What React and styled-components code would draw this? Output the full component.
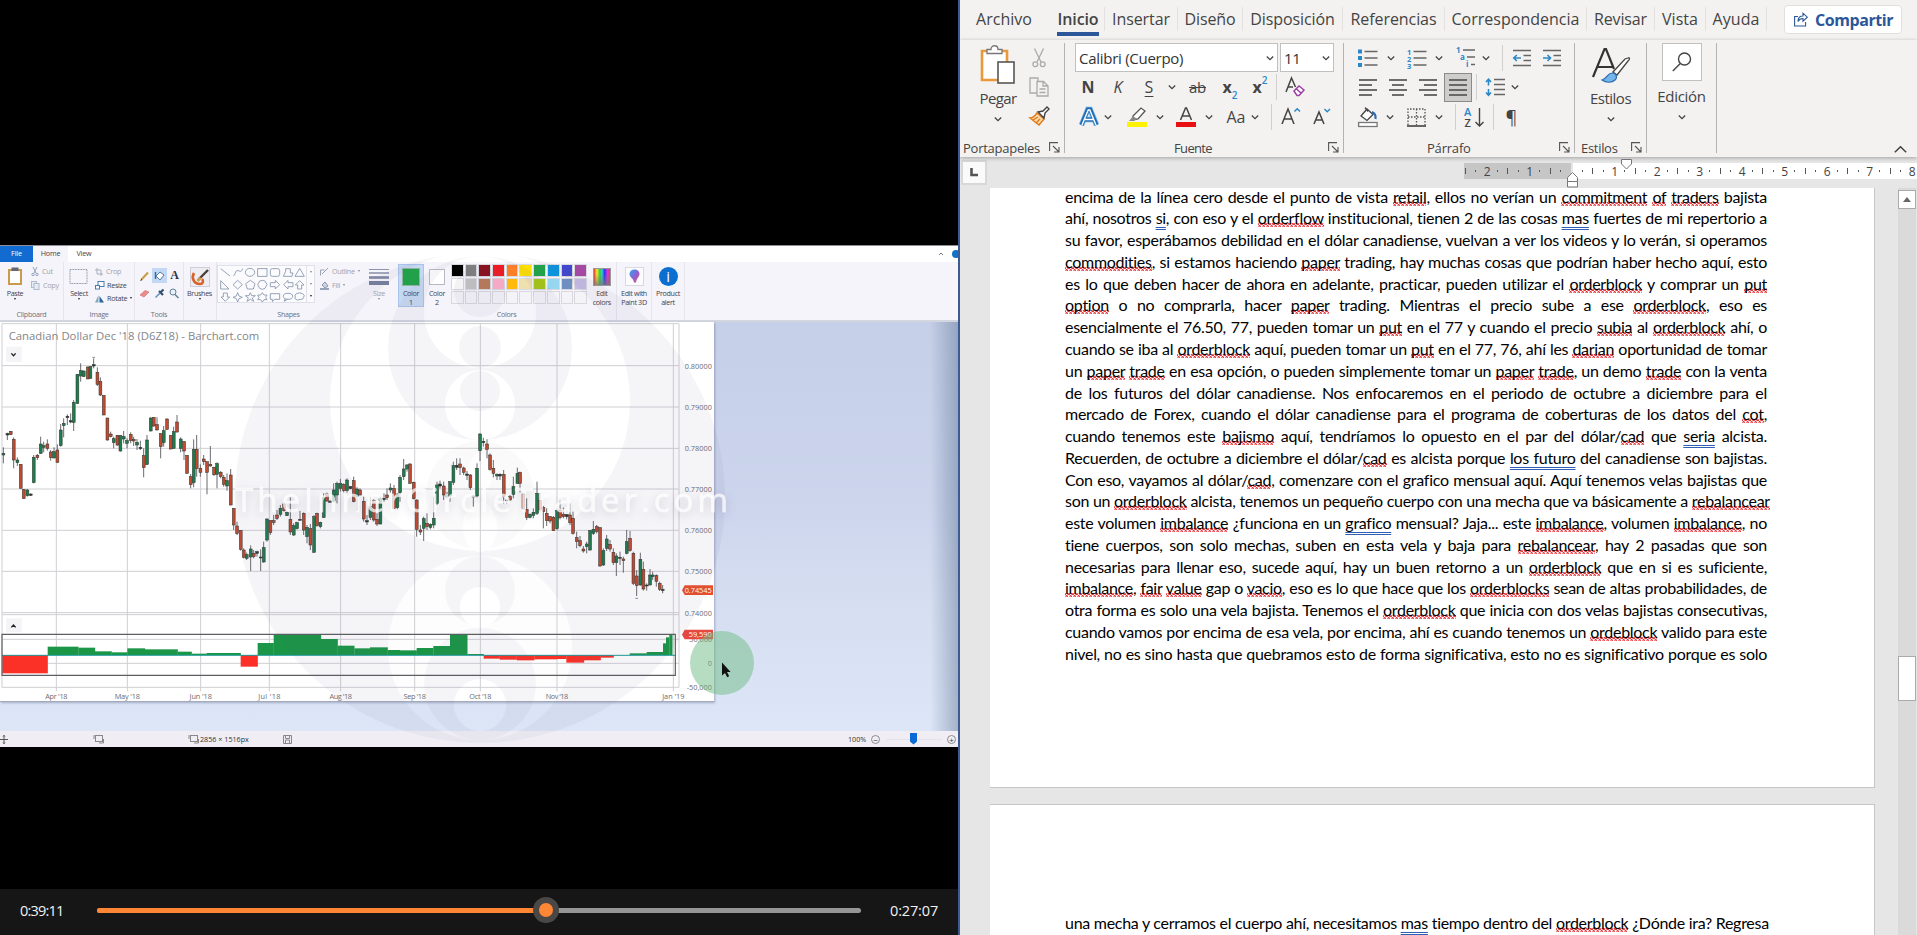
import React from "react";
import styled, { createGlobalStyle, css } from "styled-components";

const Global = createGlobalStyle`
  * { box-sizing: border-box; }
  html, body { margin: 0; padding: 0; background: #000; overflow: hidden; }
  svg { display: block; flex: none; overflow: visible; }
`;
const UI = `"Open Sans", "Noto Sans", sans-serif`;

/* ---------- frame ---------- */
const Screen = styled.div`
  display: flex;
  width: 1917px;
  height: 935px;
  overflow: hidden;
  font-family: ${UI};
`;
const VideoPane = styled.section`
  display: flex;
  flex-direction: column;
  width: 958px;
  height: 935px;
  padding-top: 245px;
  background: #000;
  overflow: hidden;
`;
const WordPane = styled.section`
  display: flex;
  flex-direction: column;
  width: 959px;
  height: 935px;
  border-left: 2px solid #3d5a94;
  background: #e6e6e6;
  overflow: hidden;
`;

/* ---------- video: paint window ---------- */
const Paint = styled.div`
  position: relative;
  width: 958px;
  height: 502px;
  overflow: hidden;
  background: #dbe4f4;
  border-top: 1px solid #8e8e96;
  color: #55555f;
  font-size: 7.2px;
  line-height: 9px;
`;
const PaintTabs = styled.div`
  display: flex;
  height: 16px;
  background: #fff;
`;
const PaintTab = styled.div`
  width: ${(p) => p.$w}px;
  padding-top: 3px;
  text-align: center;
  letter-spacing: -0.15px;
  color: ${(p) => (p.$file ? "#fff" : "#44444c")};
  background: ${(p) => (p.$file ? "#126bd0" : p.$on ? "#f5f4fa" : "#fff")};
`;
const TabTail = styled.div`
  display: flex;
  align-items: center;
  justify-content: flex-end;
  gap: 8px;
  flex: 1;
  color: #777;
`;
const HelpDot = styled.span`
  width: 8px;
  height: 8px;
  margin-right: -2px;
  border-radius: 50%;
  background: #1371c8;
`;
const PaintRibbon = styled.div`
  display: flex;
  height: 60px;
  background: #f5f4fa;
  border-bottom: 2px solid #d3d5df;
`;
const PGroup = styled.div`
  display: flex;
  flex-direction: column;
  width: ${(p) => p.$w}px;
  flex: none;
  border-right: 1px solid ${(p) => (p.$open ? "transparent" : "#e6e5ec")};
`;
const PBody = styled.div`
  display: flex;
  height: 48px;
  padding-left: ${(p) => p.$pl || 0}px;
  gap: ${(p) => p.$gap || 0}px;
`;
const PLabel = styled.div`
  text-align: center;
  letter-spacing: -0.3px;
  color: #70707a;
`;
const PBig = styled.div`
  display: flex;
  flex-direction: column;
  align-items: center;
  width: ${(p) => p.$w}px;
  height: 43px;
  margin-top: 2px;
  padding-top: 3px;
  white-space: nowrap;
  letter-spacing: -0.35px;
  color: ${(p) => (p.$dim ? "#a2a2aa" : "#44444e")};
  ${(p) => p.$on && css`background: #c6d9f2; box-shadow: inset 0 0 0 1px #a9c4ea;`}
`;
const PIcon = styled.div`
  display: flex;
  align-items: center;
  justify-content: center;
  width: 20px;
  height: 19px;
  margin-bottom: 3px;
`;
const PStack = styled.div`
  display: flex;
  flex-direction: column;
  gap: 4.5px;
  padding-top: 5px;
`;
const PSmall = styled.div`
  display: flex;
  align-items: center;
  gap: 3px;
  height: 9px;
  letter-spacing: -0.28px;
  color: ${(p) => (p.$dim ? "#a2a2aa" : "#44444e")};
`;
const Caret = styled.span`
  width: 0;
  height: 0;
  border: 1.5px solid transparent;
  border-top: 2px solid ${(p) => (p.$dim ? "#888" : "#222")};
`;
const ToolGrid = styled.div`
  display: grid;
  grid-template-columns: 15px 15px 15px;
  grid-auto-rows: 15px;
  row-gap: 3px;
  padding-top: 6px;
`;
const ToolCell = styled.div`
  display: flex;
  align-items: center;
  justify-content: center;
  background: ${(p) => (p.$on ? "#c3d8f4" : "transparent")};
  font: bold 12px/15px "Liberation Serif", serif;
  color: #26364e;
`;
const ShapeBox = styled.div`
  display: flex;
  width: 98px;
  height: 38px;
  margin-top: 3px;
  background: #fbfbfe;
  border: 1px solid #e0e0e8;
`;
const ShapeScroll = styled.div`
  display: flex;
  flex-direction: column;
  align-items: center;
  justify-content: space-around;
  width: 8px;
  border-left: 1px solid #e0e0e8;
`;
const Swatch = styled.div`
  width: ${(p) => p.$s}px;
  height: ${(p) => p.$s}px;
  background: ${(p) => p.$c};
  border: 1px solid ${(p) => p.$line || "#b8b8c0"};
`;
const Palette = styled.div`
  display: grid;
  grid-template-columns: repeat(10, 12.7px);
  grid-auto-rows: 12.7px;
  gap: 1px;
  height: 41px;
  margin: 2px 4px 0 1px;
`;
const PaletteCell = styled.div`
  background: ${(p) => p.$c};
  border: 1px solid #d8d8de;
`;
const Spectrum = styled.div`
  width: 18px;
  height: 18px;
  border: 1px solid #999;
  background: linear-gradient(to bottom, transparent 30%, rgba(120, 120, 120, 0.75)),
    linear-gradient(to right, #e33, #ee3 18%, #3c3 36%, #3cc 50%, #33e 66%, #d3d 84%, #e35);
`;
const InfoDot = styled.div`
  width: 19px;
  height: 19px;
  flex: none;
  border-radius: 50%;
  background: #0b6fd0;
  color: #fff;
  font-size: 15px;
  line-height: 18px;
  text-align: center;
`;
const Workspace = styled.div`
  display: flex;
  align-items: flex-start;
  height: 409px;
  background:
    linear-gradient(to right, transparent 930px, rgba(70, 95, 130, 0.38) 958px),
    linear-gradient(to bottom, #c5cfe7 0%, #ccd5ec 45%, #d6dff1 70%, #dce6f7 100%);
`;
const CanvasSheet = styled.div`
  width: 714px;
  height: 380px;
  background: #fff;
  border-bottom: 1px solid #a5aaba;
  box-shadow: 1px 1px 2px rgba(80, 90, 130, 0.4);
`;
const StatusBar = styled.div`
  display: flex;
  align-items: center;
  height: 16px;
  background: #f0eef4;
  color: #333;
`;
const StatusCell = styled.div`
  display: flex;
  align-items: center;
  gap: 1px;
  width: ${(p) => p.$w}px;
  flex: none;
  padding-left: ${(p) => p.$pl || 0}px;
  white-space: nowrap;
`;
const Round = styled.span`
  display: flex;
  align-items: center;
  justify-content: center;
  width: 9px;
  height: 9px;
  flex: none;
  border: 1px solid #8b8b90;
  border-radius: 50%;
  font-size: 8px;
  line-height: 7px;
  color: #333;
`;
const ZoomTrack = styled.span`
  display: flex;
  justify-content: center;
  width: 67px;
  height: 13px;
  background: linear-gradient(#e4e3e9, #e4e3e9) center / 56px 1px no-repeat;
`;
const ZoomThumb = styled.span`
  width: 7px;
  height: 12px;
  background: #0a6ad6;
  clip-path: polygon(0 0, 100% 0, 100% 75%, 50% 100%, 0 75%);
`;
const Overlay = styled.svg`
  position: absolute;
  left: 0;
  top: 0;
  pointer-events: none;
`;
const Brand = styled.text`
  font-family: ${UI};
  font-size: 33px;
  fill: #fff;
  fill-opacity: 0.72;
  stroke: #fff;
  stroke-opacity: 0.5;
  stroke-width: 1px;
  filter: drop-shadow(0 3px 5px rgba(80, 70, 100, 0.28));
`;

/* ---------- player ---------- */
const Player = styled.div`
  display: flex;
  align-items: center;
  height: 46px;
  margin-top: auto;
  padding: 0 0 4px 20px;
  background: #161616;
  color: #f2f2f2;
  font-size: 14.5px;
`;
const Time = styled.span`
  width: ${(p) => p.$w}px;
  flex: none;
  letter-spacing: ${(p) => p.$ls}px;
`;
const Seek = styled.div`
  display: flex;
  align-items: center;
  flex: none;
  width: 764px;
  height: 5px;
  border-radius: 3px;
  background: #969696;
  margin-right: 29px;
`;
const Played = styled.div`
  width: 436px;
  height: 5px;
  border-radius: 3px 0 0 3px;
  background: #ff8634;
`;
const Knob = styled.div`
  width: 26px;
  height: 26px;
  border-radius: 50%;
  border: 6.5px solid #4a4847;
  background: #ff8634;
`;

/* ---------- word ribbon ---------- */
const Tabs = styled.div`
  display: flex;
  height: 40px;
  padding-top: 7px;
  background: #f3f2f1;
  flex: none;
`;
const Tab = styled.div`
  display: flex;
  justify-content: center;
  width: ${(p) => p.$w}px;
  height: 24px;
  flex: none;
  border-right: 1px solid ${(p) => (p.$plain ? "transparent" : "#e4e2e0")};
  padding-right: ${(p) => p.$pr || 0}px;
  font-size: 16px;
  line-height: 24px;
  letter-spacing: ${(p) => p.$ls}px;
  white-space: nowrap;
  color: #444;
  font-weight: ${(p) => (p.$on ? 600 : 400)};
`;
const TabText = styled.span`
  height: 29px;
  border-bottom: ${(p) => (p.$on ? "4px solid #2b579a" : "none")};
`;
const Share = styled.div`
  display: flex;
  align-items: center;
  gap: 7px;
  width: 118px;
  height: 29px;
  margin: -2px 0 0 17px;
  padding-left: 9px;
  border: 1px solid #e1dfdd;
  border-radius: 4px;
  background: #fff;
  color: #2b579a;
  font-size: 16px;
  font-weight: 700;
  letter-spacing: -0.44px;
`;
const Ribbon = styled.div`
  display: flex;
  height: 117px;
  padding-top: 3px;
  background: #f3f2f1;
  flex: none;
  box-shadow: 0 1px 4px rgba(0, 0, 0, 0.3);
  position: relative;
`;
const Group = styled.div`
  display: flex;
  flex-direction: column;
  width: ${(p) => p.$w}px;
  height: 110px;
  flex: none;
  border-right: 1px solid #b5b3b1;
`;
const GroupFoot = styled.div`
  display: flex;
  align-items: center;
  height: 11px;
  margin-top: auto;
  padding-right: 4px;
  font-size: 13px;
  line-height: 16px;
  letter-spacing: ${(p) => p.$ls || 0}px;
  color: #444;
`;
const FootText = styled.span`
  flex: 1;
  padding-left: ${(p) => p.$pl}px;
  white-space: nowrap;
`;
const Row = styled.div`
  display: flex;
  align-items: center;
  height: ${(p) => p.$h || 30}px;
`;
const Tool = styled.div`
  display: flex;
  align-items: center;
  justify-content: center;
  width: ${(p) => p.$w}px;
  height: 29px;
  flex: none;
  margin-left: ${(p) => p.$gap || 0}px;
  font-size: ${(p) => p.$fs || 16}px;
  color: #444;
  white-space: nowrap;
  ${(p) => p.$on && css`background: #cfcdcb; box-shadow: inset 0 0 0 1px #8c8a88;`}
`;
const Rule = styled.div`
  width: 1px;
  height: 26px;
  flex: none;
  margin-left: ${(p) => p.$gap}px;
  background: #d2d0ce;
`;
const Combo = styled.div`
  display: flex;
  align-items: center;
  justify-content: space-between;
  width: ${(p) => p.$w}px;
  height: 29px;
  margin-left: ${(p) => p.$gap}px;
  padding: 0 3px;
  border: 1px solid #c2c0be;
  background: #fff;
  font-size: 15px;
  letter-spacing: -0.27px;
  color: #333;
`;
const BigTool = styled.div`
  display: flex;
  flex-direction: column;
  align-items: center;
  width: ${(p) => p.$w}px;
  margin-left: ${(p) => p.$gap || 0}px;
  color: #444;
  font-size: 15px;
  letter-spacing: ${(p) => p.$ls || 0}px;
`;
const BigText = styled.span`
  height: 24px;
  line-height: 24px;
  margin-top: ${(p) => p.$mt || 0}px;
  margin-bottom: 5px;
`;
const IconHold = styled.div`
  display: flex;
  align-items: center;
  justify-content: center;
  width: 40px;
  height: ${(p) => p.$h || 43}px;
  ${(p) => p.$boxed && css`background: #fff; border: 1px solid #c2c0be;`}
`;
const Columns = styled.div`
  display: flex;
`;
const SmallCol = styled.div`
  display: flex;
  flex-direction: column;
  width: 24px;
`;
const Strike = styled.span`
  text-decoration: line-through;
  letter-spacing: -0.3px;
`;
const Under = styled.span`
  text-decoration: underline;
  text-underline-offset: 3px;
`;
const Script = styled.span`
  align-self: ${(p) => (p.$up ? "flex-start" : "flex-end")};
  font-size: 10px;
  line-height: 14px;
  font-weight: 600;
  color: #2b88c8;
`;
const Collapse = styled.div`
  display: flex;
  align-items: flex-end;
  justify-content: flex-end;
  flex: 1;
  padding: 0 10px 1px 0;
`;

/* ---------- ruler ---------- */
const RulerBar = styled.div`
  display: flex;
  height: 31px;
  padding-top: 5px;
  flex: none;
`;
const TabStop = styled.div`
  display: flex;
  align-items: center;
  justify-content: center;
  width: 22px;
  height: 21px;
  margin-left: 3px;
  background: #fafafa;
  box-shadow: 0 0 0 2px #d8d8d8;
`;
const Ruler = styled.div`
  position: relative;
  display: flex;
  width: 453px;
  height: 16px;
  margin: 1px 0 0 479px;
  background: linear-gradient(to right, #c6c6c6 107px, #e6e6e6 107px, #e6e6e6 109px, #fff 109px);
`;
const Marks = styled.div`
  display: flex;
  align-items: center;
  width: 453px;
  height: 16px;
  margin-left: -4px;
`;
const Mark = styled.span`
  display: flex;
  align-items: center;
  justify-content: center;
  width: 10.63px;
  flex: none;
  font-size: 12px;
  color: #444;
  &::before {
    content: "";
    width: 1px;
    height: ${(p) => p.$h}px;
    background: #555;
  }
`;
const Indent = styled.div`
  position: absolute;
  left: ${(p) => p.$x}px;
  top: ${(p) => p.$y}px;
`;

/* ---------- document ---------- */
const DocArea = styled.div`
  display: flex;
  flex: 1;
  min-height: 0;
`;
const Pages = styled.div`
  display: flex;
  flex-direction: column;
  gap: 16px;
  width: 885px;
  margin-left: 30px;
`;
const Page = styled.div`
  height: ${(p) => p.$h}px;
  flex: none;
  padding: ${(p) => p.$pt}px 108px 0 75px;
  background: #fff;
  border: solid #c6c6c6;
  border-width: ${(p) => (p.$first ? "0 1px 1px 0" : "1px 1px 0 0")};
  overflow: hidden;
`;
const Line = styled.p`
  margin: 0;
  height: 21.78px;
  width: 702px;
  font-family: Lato, "Liberation Sans", sans-serif;
  font-size: 16px;
  line-height: 21.78px;
  letter-spacing: -0.28px;
  color: #000;
  white-space: nowrap;
  text-align: justify;
  text-align-last: justify;
  &:first-child { margin-top: ${(p) => p.$shift || 0}px; }
`;
const Misspelt = styled.span`
  background:
    linear-gradient(45deg, transparent 65%, #e5262b 76%, transparent 92%),
    linear-gradient(135deg, transparent 5%, #e5262b 16%, transparent 28%),
    linear-gradient(135deg, transparent 44%, #e5262b 55%, transparent 68%),
    linear-gradient(45deg, transparent 22%, #e5262b 35%, transparent 50%);
  background-size: 4px 4px;
  background-repeat: repeat-x;
  background-position: 0 100%;
`;
const Grammar = styled.span`
  text-decoration: underline double #2f5fb5 1px;
  text-underline-offset: 3px;
  text-decoration-skip-ink: none;
`;
const ScrollTrack = styled.div`
  display: flex;
  flex-direction: column;
  width: 18px;
  margin-left: 23px;
  background: #dadada;
`;
const ScrollButton = styled.div`
  display: flex;
  align-items: center;
  justify-content: center;
  height: 19px;
  margin-top: 2px;
  border: 1px solid #ababab;
  background: #fff;
`;
const ScrollThumb = styled.div`
  height: 45px;
  margin-top: 447px;
  border: 1px solid #ababab;
  background: #fff;
`;

/* ---------- chart data: x, high, top, bottom, low, colour ---------- */
const CANDLES = `10 622 640 645 670 g|22 578 581 585 600 k|32 573 574 584 585 r|41 592 598 660 685 r|52 652 660 668 678 g|62 673 673 745 745 r|71 748 748 776 776 r|82 747 750 767 770 g|92 760 762 766 768 k|101 645 652 728 730 g|112 642 646 653 660 r|122 590 612 640 642 g|131 605 617 622 637 g|142 598 612 625 632 r|152 630 636 653 662 r|162 622 635 654 655 g|172 613 630 667 668 r|182 552 570 617 620 g|191 535 550 557 592 g|202 523 529 533 555 k|212 520 542 546 550 k|221 480 487 547 573 g|232 402 403 490 492 g|242 370 392 408 425 g|251 392 393 410 410 g|263 380 381 417 417 r|271 378 380 415 416 g|281 355 374 378 385 k|292 382 397 433 438 r|301 412 424 465 468 r|311 466 466 525 525 r|322 534 534 600 602 r|332 575 582 590 592 r|341 590 596 608 625 g|352 585 586 615 618 r|361 585 587 633 635 g|371 573 590 597 610 g|381 595 602 610 625 g|392 577 583 602 610 r|401 590 598 603 618 r|411 597 607 615 630 g|421 602 622 626 630 k|431 625 647 683 712 r|441 585 600 673 675 g|452 532 534 573 574 g|461 532 532 558 560 r|471 532 554 570 571 r|482 580 581 620 655 r|491 558 572 608 620 g|501 535 537 568 570 r|512 585 587 627 628 r|521 560 575 625 626 g|531 525 546 576 578 r|542 592 597 625 637 g|552 603 605 633 660 r|561 646 646 700 700 r|572 702 710 734 745 r|581 598 628 728 742 g|590 585 628 686 710 r|601 673 685 697 710 r|611 645 657 665 675 r|621 665 665 697 763 r|631 618 673 678 680 r|642 680 682 704 708 r|651 667 671 703 745 g|662 693 697 710 715 r|671 705 712 733 740 r|681 700 722 738 752 g|692 687 705 795 796 r|701 805 805 855 870 r|711 845 858 880 885 r|722 870 872 928 932 r|731 925 930 952 955 r|740 938 944 955 960 g|752 916 927 951 993 g|761 930 940 950 955 r|771 932 935 940 950 k|782 928 951 954 993 k|791 905 923 966 968 g|801 835 837 900 905 g|811 840 842 878 885 r|821 825 842 848 855 r|831 810 825 835 840 r|841 795 805 823 830 g|852 788 792 812 815 r|861 815 817 827 828 g|871 772 838 876 885 r|881 850 857 885 888 g|891 845 848 866 868 g|900 813 838 840 841 k|911 817 820 870 885 r|921 855 862 890 910 g|931 852 866 915 930 r|942 825 830 937 938 g|951 818 820 857 860 r|961 845 848 860 865 g|971 760 773 833 834 g|981 758 762 783 785 r|990 780 784 786 787 k|1001 730 750 783 787 g|1011 725 730 765 790 g|1021 717 730 745 755 g|1031 730 733 752 757 r|1041 715 720 752 758 g|1051 738 740 746 748 k|1061 710 722 785 787 r|1071 742 747 770 812 g|1080 745 750 765 766 r|1091 770 784 837 845 r|1101 825 842 846 855 k|1111 770 800 832 840 g|1121 778 782 840 845 r|1131 820 838 852 858 r|1141 770 775 852 853 g|1152 760 775 779 785 k|1161 745 765 773 780 r|1171 730 744 750 758 g|1182 735 746 805 808 r|1192 760 762 803 808 g|1200 705 712 758 785 g|1211 657 687 710 720 g|1221 672 675 687 695 g|1230 670 672 730 732 r|1241 725 727 776 778 r|1250 778 780 868 890 r|1261 855 870 876 885 r|1271 830 836 865 903 g|1281 820 850 860 870 r|1291 850 853 862 868 g|1301 770 835 855 865 g|1311 725 735 790 795 g|1320 722 732 738 745 k|1331 725 738 765 780 r|1341 755 762 771 775 g|1350 725 725 768 785 g|1360 665 677 727 735 g|1370 655 676 682 690 k|1380 655 672 683 705 r|1391 680 684 697 705 r|1401 693 702 706 720 k|1411 702 705 743 750 r|1420 765 768 770 800 k|1431 670 685 768 772 g|1440 580 582 632 663 g|1450 593 604 608 620 k|1461 598 612 628 655 r|1470 640 645 688 692 r|1480 660 685 700 712 r|1491 700 703 708 720 g|1500 700 703 708 720 k|1511 690 703 770 792 r|1520 778 780 782 792 k|1530 765 770 780 782 r|1540 710 740 763 775 g|1552 683 700 730 731 g|1560 695 697 730 757 r|1570 758 762 805 810 r|1580 775 808 832 840 r|1590 820 823 832 835 g|1600 805 817 826 835 g|1611 725 760 820 825 g|1620 760 782 808 815 r|1630 798 803 815 865 r|1640 805 820 842 858 r|1650 828 830 843 850 r|1660 828 832 872 873 r|1671 805 812 866 870 g|1680 782 810 833 838 r|1690 803 823 830 835 r|1700 822 824 830 838 k|1710 790 825 848 855 r|1719 815 835 880 884 r|1730 875 893 905 925 r|1740 888 902 917 922 r|1750 918 927 933 938 r|1760 905 912 920 940 g|1770 870 872 930 932 g|1780 843 868 880 885 g|1790 855 860 875 880 r|1800 862 863 978 980 r|1810 925 932 975 978 g|1820 885 897 925 933 g|1830 900 913 927 935 r|1840 925 937 968 975 r|1849 940 948 968 1008 g|1860 935 952 955 975 k|1870 950 957 962 998 r|1880 870 905 940 943 g|1890 873 895 932 935 r|1900 935 940 1030 1035 r|1910 990 1008 1037 1068 r|1921 938 958 1035 1037 g|1930 965 988 1047 1052 r|1940 1030 1035 1038 1052 k|1950 987 1005 1035 1036 g|1958 995 1005 1010 1020 g|1969 1003 1007 1024 1040 r|1979 1025 1030 1048 1053 r|1988 1035 1048 1052 1060 k`
  .split("|")
  .map((s) => {
    const [x, hi, top, bot, lo, c] = s.split(" ");
    return { x: +x, hi: +hi, top: +top, bot: +bot, lo: +lo, c };
  });
const FILL = { g: "#1c7d4d", r: "#c4492f", k: "#26352e" };

/* from, to, level edge */
const BARS = [
  [7, 143, 1300], [143, 235, 1220], [235, 285, 1223], [285, 335, 1234], [335, 382, 1237], [382, 435, 1225],
  [435, 533, 1228], [533, 575, 1235], [575, 620, 1241], [620, 722, 1239], [722, 773, 1280], [773, 821, 1209],
  [821, 963, 1185], [963, 1013, 1197], [1013, 1063, 1217], [1063, 1110, 1225], [1110, 1163, 1222], [1163, 1200, 1230],
  [1200, 1250, 1231], [1250, 1300, 1224], [1300, 1350, 1218], [1350, 1402, 1184], [1402, 1451, 1242],
  [1451, 1499, 1256], [1499, 1550, 1259], [1550, 1603, 1261], [1603, 1671, 1258], [1671, 1699, 1257],
  [1699, 1752, 1268], [1752, 1802, 1261], [1802, 1841, 1253], [1889, 1940, 1240], [1940, 1989, 1236],
  [1989, 1998, 1210], [1998, 2008, 1192], [2008, 2017, 1184],
];
const BASE = 1245;
const MONTHS = [[169, "Apr '18"], [382, "May '18"], [602, "Jun '18"], [808, "Jul '18"], [1022, "Aug '18"], [1244, "Sep '18"], [1441, "Oct '18"], [1671, "Nov '18"], [2020, "Jan '19"]];
const PRICES = [[377, "0.80000"], [501, "0.79000"], [625, "0.78000"], [747, "0.77000"], [871, "0.76000"], [994, "0.75000"], [1118, "0.74000"]];

function Chart() {
  return (
    <svg width="714" height="379" viewBox="0 246 2142 1137" fontFamily={UI}>
      <g stroke="#cfcfd4" strokeWidth="3" fill="none">
        <path d="M6 251H2037V1342H6Z" />
        {MONTHS.map(([x]) => <path key={x} d={`M${x} 251V1354`} />)}
        {PRICES.map(([y]) => <path key={y} d={`M6 ${y}H2037`} />)}
        <path d="M6 1124H2037M6 1198H2037M6 1270H2037" />
      </g>
      <g>
        {CANDLES.map((c) => (
          <g key={c.x}>
            <path d={`M${c.x} ${c.hi}V${c.lo}`} stroke="#45454a" strokeWidth="2.4" />
            <rect x={c.x - 4} y={c.top} width="8.5" height={Math.max(c.bot - c.top, 3)} fill={FILL[c.c]} stroke="#30352f" strokeWidth="1.6" />
          </g>
        ))}
        <path d="M277 352h8M1906 1075h8" stroke="#777" strokeWidth="2.5" />
      </g>
      {BARS.map(([a, b, y]) => (
        <rect key={a} x={a} y={Math.min(y, BASE)} width={b - a + 0.5} height={Math.abs(y - BASE)} fill={y > BASE ? "#fb3026" : "#1a9646"} />
      ))}
      <path d="M6 1246H2026" stroke="#1d9a9c" strokeWidth="3" />
      <path d="M6 1183H2026V1306H6Z" fill="none" stroke="#5d5d62" strokeWidth="3.5" />
      <text x="26" y="300" fontSize="34" textLength="752" fill="#85858a">Canadian Dollar Dec '18 (D6Z18) - Barchart.com</text>
      <rect x="18" y="320" width="47" height="46" fill="#f4f4f6" />
      <path d="M34 340l6.500 7 6.500-7" stroke="#222" strokeWidth="4" fill="none" />
      <rect x="18" y="1135" width="47" height="42" fill="#f4f4f6" />
      <path d="M34 1162l6.500-7 6.500 7" stroke="#222" strokeWidth="4" fill="none" />
      <g fontSize="22" fill="#6c6c72">
        {MONTHS.map(([x, t]) => <text key={t} x={x} y="1377" textAnchor="middle" textLength={t.startsWith("M") ? 76 : 67}>{t}</text>)}
        {PRICES.map(([y, t]) => <text key={t} x="2054" y={y + 9} textLength="82">{t}</text>)}
        <text x="2136" y="1206" textAnchor="end" textLength="68">50,000</text>
        <text x="2136" y="1279" textAnchor="end">0</text>
        <text x="2136" y="1351" textAnchor="end" textLength="76">-50,000</text>
      </g>
      <path d="M2046 1051l8-15h85v29h-85z" fill="#e84e2a" />
      <path d="M2046 1184l8-15h85v29h-85z" fill="#e5483f" />
      <g fontSize="22" fill="#fff">
        <text x="2054" y="1059" textLength="81">0.74545</text>
        <text x="2135" y="1192" textAnchor="end" textLength="69">59,590</text>
      </g>
    </svg>
  );
}

function Watermark() {
  return (
    <Overlay width="958" height="502" viewBox="0 245 958 502">
      <defs>
        <mask id="emblem">
          <circle cx="480" cy="497" r="245" fill="#fff" />
          <circle cx="480" cy="400" r="150" fill="#000" />
          <circle cx="480" cy="347" r="92" fill="#fff" />
          <circle cx="480" cy="311" r="56" fill="#000" />
          <circle cx="480" cy="290" r="26" fill="#fff" />
          <circle cx="480" cy="346" r="21" fill="#fff" />
          <circle cx="480" cy="404" r="35" fill="#000" />
          <circle cx="480" cy="390" r="20" fill="#fff" />
          <circle cx="480" cy="494" r="54" fill="#888" />
          <ellipse cx="480" cy="474" rx="12" ry="22" fill="#000" />
          <ellipse cx="480" cy="526" rx="17" ry="25" fill="#000" />
          <circle cx="480" cy="647" r="92" fill="#222" />
          <circle cx="480" cy="683" r="56" fill="#fff" />
          <circle cx="480" cy="704" r="26" fill="#000" />
          <circle cx="480" cy="590" r="35" fill="#fff" />
          <circle cx="480" cy="606" r="20" fill="#000" />
        </mask>
      </defs>
      <rect x="230" y="246" width="500" height="500" fill="#6a6090" opacity="0.06" mask="url(#emblem)" />
      <Brand x="235" y="511" textLength="493">TheInnerCircleTrader.com</Brand>
      <circle cx="722" cy="662" r="32" fill="#6ebb84" fillOpacity="0.5" />
      <path d="M722 661.500v13l3-2.600 2.200 4.300 2-1-2.200-4.200h3.600z" fill="#111" />
    </Overlay>
  );
}

const PALETTE = ["#000", "#7f7f7f", "#880f1c", "#ed1c24", "#ff7f27", "#fddf00", "#22a04a", "#0c93dd", "#3f48cc", "#a349a4",
  "#fdfdfd", "#c3c3c3", "#b97a57", "#ffaec9", "#ffba0d", "#efe1ae", "#a5c714", "#96d6f0", "#6e8fc2", "#c5bce6",
  ...Array(10).fill("#f4f3f8")];

function ShapesIcon() {
  return (
    <svg width="88" height="36" viewBox="0 0 264 108" fill="none" stroke="#8797ad" strokeWidth="2.600">
      <path d="M8 8l28 22M46 30c10-8 4-18 14-16s8 6 14-6" />
      <ellipse cx="96" cy="19" rx="14" ry="12" /><rect x="119" y="8" width="28" height="23" />
      <rect x="157" y="8" width="28" height="23" rx="6" /><path d="M196 31h26l3-10h-8V8h-14v8zM231 31l14-24 14 24z" />
      <path d="M8 44v25h25zM59 43l14 13-14 13-14-13zM97 43l14 10-5 16H88l-5-16zM125 45l8-2 8 2 6 11-6 11-8 3-8-3-6-11zM157 50h15v-7l13 13-13 13v-7h-15zM225 50h-15v-7l-13 13 13 13v-7h15zM239 69V57h-7l13-13 13 13h-7v12z" />
      <path d="M16 81h12v12h7l-13 13-13-13h7zM59 80l4 10 10 4-10 4-4 10-4-10-10-4 10-4zM97 80l4 9h11l-9 7 4 10-10-6-10 6 4-10-9-7h11zM133 80l5 7h9l-4 7 4 7h-9l-5 7-5-7h-9l4-7-4-7h9zM157 83h28v17h-16l-6 7v-7h-6z" />
      <ellipse cx="210" cy="91" rx="14" ry="9" /><path d="M201 98l-2 8 9-6M235 83q10-5 19 0 8 4 3 11 0 6-8 6-12 5-17-1-3-2 0-6-3-6 3-10z" />
    </svg>
  );
}

function PaintApp() {
  return (
    <Paint>
      <PaintTabs>
        <PaintTab $w={33} $file>File</PaintTab>
        <PaintTab $w={35} $on>Home</PaintTab>
        <PaintTab $w={32}>View</PaintTab>
        <TabTail><svg width="6" height="4"><path d="M1 3l2-2 2 2" fill="none" stroke="#777" /></svg><HelpDot /></TabTail>
      </PaintTabs>
      <PaintRibbon>
        <PGroup $w={64}>
          <PBody $pl={3} $gap={4}>
            <PBig $w={24}>
              <PIcon><svg width="16" height="19"><rect x="1" y="2" width="14" height="16" fill="#c89c4c" /><rect x="3" y="4" width="10" height="12" fill="#fff" /><rect x="4.500" y="0.500" width="7" height="3.500" fill="#667" /></svg></PIcon>
              Paste<Caret />
            </PBig>
            <PStack>
              <PSmall $dim><svg width="8" height="9" stroke="#93a3bd" fill="none"><path d="M2 0l3 6M6 0L3 6" /><circle cx="2" cy="7.500" r="1.200" /><circle cx="6" cy="7.500" r="1.200" /></svg>Cut</PSmall>
              <PSmall $dim><svg width="9" height="9" stroke="#b0bccd" fill="#e6ecf5"><rect x="0.500" y="0.500" width="5" height="6" /><rect x="3" y="2.500" width="5" height="6" /></svg>Copy</PSmall>
            </PStack>
          </PBody>
          <PLabel>Clipboard</PLabel>
        </PGroup>
        <PGroup $w={71}>
          <PBody $pl={3} $gap={4}>
            <PBig $w={24}>
              <PIcon><svg width="20" height="17"><rect x="1" y="1.500" width="17" height="14" fill="none" stroke="#8a94a5" strokeDasharray="1 0.600" /></svg></PIcon>
              Select<Caret />
            </PBig>
            <PStack>
              <PSmall $dim><svg width="8" height="8" stroke="#a9b0bd" fill="none"><path d="M2 0v6h6M0 2h6v6" /></svg>Crop</PSmall>
              <PSmall><svg width="9" height="9" stroke="#4a7cb0" fill="#fff"><rect x="3" y="0.500" width="6" height="5" /><rect x="0.500" y="4.500" width="4" height="3.500" /></svg>Resize</PSmall>
              <PSmall><svg width="9" height="9"><path d="M0 8.500L3.500 1v7.500z" fill="#8ab" /><path d="M4.500 8.500V2L9 8.500z" fill="#2b62a0" /></svg>Rotate<Caret /></PSmall>
            </PStack>
          </PBody>
          <PLabel>Image</PLabel>
        </PGroup>
        <PGroup $w={49}>
          <PBody $pl={2}>
            <ToolGrid>
              <ToolCell><svg width="10" height="10"><path d="M1 9L8 1.500" stroke="#c89d45" strokeWidth="2" /><path d="M0.500 9.500l1.500-1" stroke="#333" /></svg></ToolCell>
              <ToolCell $on><svg width="11" height="11"><path d="M2 6l4-4 4 3-4 5z" fill="#fff" stroke="#5b7aa0" /><path d="M1.500 2v7" stroke="#2c6db4" strokeWidth="1.500" /></svg></ToolCell>
              <ToolCell>A</ToolCell>
              <ToolCell><svg width="11" height="9"><path d="M1 6l5-4.500 4 1.500-5 5z" fill="#ef8a8a" stroke="#c96d72" strokeWidth="0.600" /></svg></ToolCell>
              <ToolCell><svg width="11" height="11"><path d="M1.500 9.500L6 5" stroke="#6a93bd" strokeWidth="1.600" /><path d="M5 3l4 4M6 5l3.500-3.500" stroke="#31506f" strokeWidth="2.200" /></svg></ToolCell>
              <ToolCell><svg width="11" height="11" fill="#e8f1fb" stroke="#667f99"><circle cx="4" cy="4" r="3" /><path d="M6 6.500l3.500 3.500" strokeWidth="1.500" /></svg></ToolCell>
            </ToolGrid>
          </PBody>
          <PLabel>Tools</PLabel>
        </PGroup>
        <PGroup $w={33}>
          <PBody $pl={3}>
            <PBig $w={25}>
              <PIcon><svg width="20" height="20"><rect x="0.500" y="0.500" width="19" height="19" fill="#eeedf4" stroke="#cfcfd8" /><path d="M4 6c-3 5 0 11 6 11 3 0 4-3 2-5" fill="none" stroke="#d8622a" strokeWidth="2.600" /><path d="M9 12l9-9" stroke="#4a4038" strokeWidth="2.400" /><path d="M7.500 14l3-3.500" stroke="#c89a55" strokeWidth="3" /></svg></PIcon>
              Brushes<Caret />
            </PBig>
          </PBody>
        </PGroup>
        <PGroup $w={144} $open>
          <PBody $gap={5}>
            <ShapeBox><ShapesIcon /><ShapeScroll><Caret $dim /><Caret $dim /><Caret /></ShapeScroll></ShapeBox>
            <PStack>
              <PSmall $dim><svg width="9" height="9" stroke="#9aa3b5" fill="none"><path d="M0.500 8.500V3h4M2 7l6-6" /></svg>Outline<Caret $dim /></PSmall>
              <PSmall $dim><svg width="9" height="9"><path d="M2 4l3-3 3 4-3 2z" fill="#cdd4e2" stroke="#8d98ad" /><path d="M0 8h9" stroke="#98a4bb" strokeWidth="2" /></svg>Fill<Caret $dim /></PSmall>
            </PStack>
          </PBody>
          <PLabel>Shapes</PLabel>
        </PGroup>
        <PGroup $w={36} $open>
          <PBody $pl={6}>
            <PBig $w={24} $dim>
              <PIcon><svg width="20" height="18"><path d="M0 1.500h20" stroke="#8d93ac" strokeWidth="1" /><path d="M0 5h20" stroke="#8d93ac" strokeWidth="1.600" /><path d="M0 9.500h20" stroke="#7f86a3" strokeWidth="2.600" /><path d="M0 15h20" stroke="#777e9c" strokeWidth="4" /></svg></PIcon>
              Size<Caret $dim />
            </PBig>
          </PBody>
        </PGroup>
        <PGroup $w={220}>
          <PBody $pl={1}>
            <PBig $w={26} $on><PIcon><Swatch $s={18} $c="#22a04a" $line="#8eb5a0" /></PIcon><span>Color</span><span>1</span></PBig>
            <PBig $w={26}><PIcon><Swatch $s={16} $c="#fff" /></PIcon><span>Color</span><span>2</span></PBig>
            <Palette>{PALETTE.map((c, i) => <PaletteCell key={i} $c={c} />)}</Palette>
            <PBig $w={22}><PIcon><Spectrum /></PIcon><span>Edit</span><span>colors</span></PBig>
          </PBody>
          <PLabel>Colors</PLabel>
        </PGroup>
        <PGroup $w={35}>
          <PBody $pl={2}>
            <PBig $w={30}>
              <PIcon><svg width="19" height="19"><defs><linearGradient id="drop" x1="0" y1="0" x2="1" y2="1"><stop offset="0" stopColor="#29a8e8" /><stop offset="0.500" stopColor="#8a63d8" /><stop offset="1" stopColor="#e8486a" /></linearGradient></defs><rect x="0.500" y="0.500" width="18" height="18" fill="#fcfcff" stroke="#d9d9e2" /><path d="M9.500 2.500c3 0 5 2 5 4.500 0 3-3 4-3.500 8.500h-2C8.500 11 4.500 10.500 4.500 7c0-2.500 2-4.500 5-4.500z" fill="url(#drop)" /></svg></PIcon>
              <span>Edit with</span><span>Paint 3D</span>
            </PBig>
          </PBody>
        </PGroup>
        <PGroup $w={33}>
          <PBody $pl={2}>
            <PBig $w={28}><PIcon><InfoDot>i</InfoDot></PIcon><span>Product</span><span>alert</span></PBig>
          </PBody>
        </PGroup>
      </PaintRibbon>
      <Workspace><CanvasSheet><Chart /></CanvasSheet></Workspace>
      <StatusBar>
        <StatusCell $w={94}><svg width="9" height="9" stroke="#555" fill="none"><path d="M4 0v9M0 4.500h8M3 1.500l1-1 1 1M3 7.500l1 1 1-1" /></svg></StatusCell>
        <StatusCell $w={95}><svg width="10" height="9" stroke="#888" fill="none"><rect x="1.500" y="0.500" width="7" height="6" /><path d="M0 0v4M9.500 4v4H5" /></svg></StatusCell>
        <StatusCell $w={94}><svg width="10" height="9" stroke="#888" fill="none"><rect x="1.500" y="0.500" width="7" height="6" /><path d="M0 0v4M9.500 4v4H5" /></svg>2856 × 1516px</StatusCell>
        <StatusCell $w={565}><svg width="9" height="9" stroke="#888" fill="none"><path d="M0.500 0.500h8v8h-8zM2.500 0.500v3h4v-3M2.500 8v-3h4v3" /></svg></StatusCell>
        <StatusCell $w={23}>100%</StatusCell>
        <Round>−</Round><ZoomTrack><ZoomThumb /></ZoomTrack><Round>+</Round>
      </StatusBar>
      <Watermark />
    </Paint>
  );
}

/* ---------- word icons ---------- */
const Chev = ({ up, s = 8 }) => (
  <svg width={s} height={s} viewBox="0 0 8 8" fill="none" stroke="#444" strokeWidth={up ? 0.95 : 1.3}>
    <path d={up ? "M0.500 5.700L4 2.300 7.500 5.700" : "M0.800 2.500L4 5.700 7.200 2.500"} />
  </svg>
);
const Launcher = () => (
  <svg width="11" height="11" fill="none" stroke="#555" strokeWidth="1.100"><path d="M0.600 9V0.600H9M4 4l5.500 5.500M10 5v5H5" /></svg>
);
const Lines = ({ rows }) => (
  <svg width="18" height="19" stroke="#555" strokeWidth="1.700">
    {rows.map(([a, b], i) => <path key={i} d={`M${a} ${i * 5 + 2}H${b}`} />)}
  </svg>
);
const ListIcon = ({ marks }) => (
  <svg width="20" height="20" fontFamily={UI}>
    <path d="M6.500 3.500H19.500M6.500 10H19.500M6.500 17H19.500" stroke="#666" strokeWidth="1.600" />
    {marks
      ? ["1", "2", "3"].map((t, i) => <text key={t} x="0" y={6.5 + i * 7} fontSize="7.500" fontWeight="700" fill="#2b88c8">{t}</text>)
      : [1.5, 8, 15].map((y) => <rect key={y} x="0" y={y} width="4" height="4" fill="#2b88c8" />)}
  </svg>
);
const MultiIcon = () => (
  <svg width="20" height="21" fontFamily={UI} fontSize="8" fontWeight="700" fill="#2b88c8">
    <path d="M7 3H19M11 10H19M15 17.500H19" stroke="#666" strokeWidth="1.600" />
    <text x="0" y="6">1</text><text x="4" y="13">a</text><text x="10" y="20">i</text>
  </svg>
);
const IndentIcon = ({ right }) => (
  <svg width="18" height="18" fill="none" strokeWidth="1.600">
    <path d="M0 1.500H18M10.500 6.500H18M10.500 11.500H18M0 16.500H18" stroke="#666" />
    <path d={right ? "M0 9h7M4.500 6l3 3-3 3" : "M8 9H1M3.800 6l-3 3 3 3"} stroke="#2b88c8" />
  </svg>
);

function WordRibbon() {
  const tabs = [["Archivo", 92, 3, 0.03], ["Inicio", 53, 0, -0.1], ["Insertar", 73, 0, -0.07], ["Diseño", 65, 0, -0.1], ["Disposición", 100, 0, -0.09], ["Referencias", 102, 0, -0.07], ["Correspondencia", 142, 0, 0.01], ["Revisar", 68, 0, -0.14], ["Vista", 51, 0, 0.04], ["Ayuda", 61, 0, 0.07]];
  return (
    <>
      <Tabs>
        {tabs.map(([t, w, pr, ls], i) => (
          <Tab key={t} $w={w} $pr={pr} $ls={ls} $on={i === 1} $plain={i === 0}><TabText $on={i === 1}>{t}</TabText></Tab>
        ))}
        <Share>
          <svg width="14" height="15" fill="none" stroke="#2b579a" strokeWidth="1.100"><path d="M4 4.500H0.600v9.500h11v-4M4 9.500c0-4 2-5.500 5-5.500V1.200l4.300 4-4.300 4V6.500c-2.500 0-4 .8-5 3z" /></svg>
          Compartir
        </Share>
      </Tabs>
      <Ribbon>
        <Group $w={105}>
          <Columns>
            <BigTool $w={60} $gap={8} $ls={-0.65}>
              <IconHold>
                <svg width="36" height="40" fill="none">
                  <path d="M5 6h22v29H2V6z" fill="#fff" stroke="#e9983c" strokeWidth="2.600" />
                  <path d="M7 8.500V4.500h4c0-5 7-5 7 0h4v4z" fill="#fff" stroke="#777" strokeWidth="1.300" />
                  <rect x="18" y="17" width="16" height="21" fill="#fff" stroke="#555" strokeWidth="1.600" />
                </svg>
              </IconHold>
              <BigText>Pegar</BigText><Chev />
            </BigTool>
            <SmallCol>
              <Tool $w={22}><svg width="14" height="20" fill="none" stroke="#aaa" strokeWidth="1.300"><path d="M2.500 0.500L9 14M11.500 0.500L5 14" /><circle cx="3.300" cy="16.300" r="2.400" /><circle cx="10.700" cy="16.300" r="2.400" /></svg></Tool>
              <Tool $w={22}><svg width="20" height="20" fill="#f3f2f1" stroke="#aaa" strokeWidth="1.300"><path d="M8 16H1V1h8v3" /><path d="M8 4.500h6.500L19 9v10H8zM14 4.500V9h5M10.500 12h6M10.500 15.500h6" /></svg></Tool>
              <Tool $w={22}><svg width="21" height="20" fill="none" strokeWidth="1.400"><path d="M8 7l7 6-5 6-9-7c3 0 5-2 7-5z" stroke="#e07b1a" fill="#fbd9a8" /><path d="M4 14l5-3M7 17l4-4" stroke="#e07b1a" /><path d="M9 6l5-1 4-4 2 2-4 4-1 5z" fill="#fff" stroke="#444" /></svg></Tool>
            </SmallCol>
          </Columns>
          <GroupFoot $ls={-0.25}><FootText $pl={3}>Portapapeles</FootText><Launcher /></GroupFoot>
        </Group>
        <Group $w={279}>
          <Row $h={29}>
            <Combo $w={203} $gap={10}>Calibri (Cuerpo)<Chev /></Combo>
            <Combo $w={54} $gap={2}>11<Chev /></Combo>
          </Row>
          <Row>
            <Tool $w={20} $gap={13}><b>N</b></Tool>
            <Tool $w={20} $gap={10}><i>K</i></Tool>
            <Tool $w={20} $gap={11}><Under>S</Under></Tool>
            <Tool $w={10} $gap={7.5}><Chev /></Tool>
            <Tool $w={22} $gap={10} $fs={15}><Strike>ab</Strike></Tool>
            <Tool $w={20} $gap={11.5}><b>x</b><Script>2</Script></Tool>
            <Tool $w={20} $gap={10}><b>x</b><Script $up>2</Script></Tool>
            <Rule $gap={6} />
            <Tool $w={22} $gap={7}><svg width="21" height="20" fill="none" strokeWidth="1.500"><path d="M1 15L6.500 1l4 9M3 10h5" stroke="#444" /><path d="M9 14l5-5 5 4-5 5.500h-2z" stroke="#9b3fa5" fill="#fff" /><path d="M11 11.500l5 4.500" stroke="#9b3fa5" /></svg></Tool>
          </Row>
          <Row>
            <Tool $w={20} $gap={14}><svg width="20" height="20" fill="none"><path d="M2.500 18L8.800 2.500h2.400L17.500 18M5.500 12.500h9" stroke="#69aee6" strokeWidth="5.500" /><path d="M2.500 18L8.800 2.500h2.400L17.500 18M5.500 12.500h9" stroke="#1f6ab0" strokeWidth="3.800" /><path d="M3 18L9.200 3h1.600L17 18M5.500 12.500h9" stroke="#fff" strokeWidth="1.400" /></svg></Tool>
            <Tool $w={10} $gap={4}><Chev /></Tool>
            <Tool $w={22} $gap={13}><svg width="20" height="21" fill="none"><path d="M6 9l8-8 4 3-7 8-5 1z" fill="#fff" stroke="#555" strokeWidth="1.300" /><path d="M2 14l4-5 4 3-3 2z" fill="#888" /><rect y="15" width="20" height="5" fill="#fff200" /></svg></Tool>
            <Tool $w={10} $gap={6.5}><Chev /></Tool>
            <Tool $w={22} $gap={10.5}><svg width="20" height="21" fill="none"><path d="M4.500 13L9.500 1h1l5 12M6.500 9h7" stroke="#444" strokeWidth="1.500" /><rect y="15" width="20" height="5" fill="#e81010" /></svg></Tool>
            <Tool $w={10} $gap={6.5}><Chev /></Tool>
            <Tool $w={22} $gap={11.5}>Aa</Tool>
            <Tool $w={10} $gap={2.5}><Chev /></Tool>
            <Rule $gap={11.5} />
            <Tool $w={20} $gap={8.5}><svg width="20" height="20" fill="none" strokeWidth="1.500"><path d="M1 17L7 2l6 15M3 12h8" stroke="#444" /><path d="M13.500 4.500l2.700-2.700L19 4.500" stroke="#2b88c8" /></svg></Tool>
            <Tool $w={20} $gap={11}><svg width="20" height="20" fill="none" strokeWidth="1.500"><path d="M2 17L7 5l5 12M3.500 13h7" stroke="#444" /><path d="M12.500 2l2.700 2.700L18 2" stroke="#2b88c8" /></svg></Tool>
          </Row>
          <GroupFoot $ls={-0.65}><FootText $pl={109}>Fuente</FootText><Launcher /></GroupFoot>
        </Group>
        <Group $w={231}>
          <Row $h={29}>
            <Tool $w={20} $gap={13.5}><ListIcon /></Tool>
            <Tool $w={10} $gap={8}><Chev /></Tool>
            <Tool $w={20} $gap={11}><ListIcon marks /></Tool>
            <Tool $w={10} $gap={7.5}><Chev /></Tool>
            <Tool $w={20} $gap={12}><MultiIcon /></Tool>
            <Tool $w={10} $gap={4.5}><Chev /></Tool>
            <Rule $gap={11.5} />
            <Tool $w={20} $gap={8.5}><IndentIcon /></Tool>
            <Tool $w={20} $gap={10}><IndentIcon right /></Tool>
          </Row>
          <Row>
            <Tool $w={20} $gap={13.5}><Lines rows={[[0, 18], [0, 13], [0, 18], [0, 13]]} /></Tool>
            <Tool $w={20} $gap={10.5}><Lines rows={[[0, 18], [3, 15], [0, 18], [3, 15]]} /></Tool>
            <Tool $w={20} $gap={10}><Lines rows={[[0, 18], [5, 18], [0, 18], [5, 18]]} /></Tool>
            <Tool $w={28} $gap={6} $on><Lines rows={[[0, 18], [0, 18], [0, 18], [0, 18]]} /></Tool>
            <Rule $gap={4} />
            <Tool $w={20} $gap={8}><svg width="20" height="19" fill="none" strokeWidth="1.600"><path d="M9 1.500h11M9 6.500h11M9 11.500h11M9 16.500h11" stroke="#666" /><path d="M3.500 1.500v6M3.500 11v6M1 4l2.500-2.800L6 4M1 14.500l2.500 2.800L6 14.500" stroke="#2b88c8" /></svg></Tool>
            <Tool $w={10} $gap={5}><Chev /></Tool>
          </Row>
          <Row>
            <Tool $w={20} $gap={14}><svg width="20" height="21" fill="none" strokeWidth="1.300"><path d="M3 9l6-7 6 5.500-6 6z" fill="#fff" stroke="#444" /><path d="M7 0.500l3 4" stroke="#444" /><path d="M14 5c3 1 4 3 3.500 7" stroke="#2b6cb0" strokeWidth="2.200" /><rect x="0.600" y="15.500" width="18.500" height="4" fill="#fff" stroke="#777" /></svg></Tool>
            <Tool $w={10} $gap={7}><Chev /></Tool>
            <Tool $w={20} $gap={11.5}><svg width="19" height="19" fill="none" stroke="#555" strokeWidth="1.300"><path d="M1 17V1h17v17M9.500 1v16M1 9h17" strokeDasharray="1.500 1.500" /><path d="M0 18h19" strokeWidth="1.800" /></svg></Tool>
            <Tool $w={10} $gap={7.5}><Chev /></Tool>
            <Rule $gap={10.5} />
            <Tool $w={22} $gap={7.5}><svg width="20" height="21" fontFamily={UI} fontSize="11" fontWeight="600"><text x="0" y="9" fill="#2b88c8">A</text><text x="0.500" y="20" fill="#444">Z</text><path d="M15.500 1v18M11.500 15l4 4 4-4" fill="none" stroke="#444" strokeWidth="1.400" /></svg></Tool>
            <Rule $gap={7.5} />
            <Tool $w={20} $gap={8} $fs={18}>¶</Tool>
          </Row>
          <GroupFoot $ls={-0.2}><FootText $pl={83}>Párrafo</FootText><Launcher /></GroupFoot>
        </Group>
        <Group $w={72}>
          <BigTool $w={71} $ls={-0.5}>
            <IconHold>
              <svg width="38" height="38" fill="none"><path d="M1 31L12.500 3h1.500l8 20M5.500 21h15" stroke="#333" strokeWidth="2.200" /><path d="M36 12c2-1 2 1 0 3L25 29l-4-3 12-13z" fill="#fff" stroke="#444" strokeWidth="1.300" /><path d="M10 34c5-1 5-7 10-7 4 0 6 4 3 7-3 3-9 3-13 0z" fill="#74b5ec" stroke="#2b6cb0" strokeWidth="1.200" /></svg>
            </IconHold>
            <BigText>Estilos</BigText><Chev />
          </BigTool>
          <GroupFoot $ls={-0.3}><FootText $pl={6}>Estilos</FootText><Launcher /></GroupFoot>
        </Group>
        <Group $w={70}>
          <BigTool $w={69} $ls={-0.28}>
            <IconHold $h={38} $boxed>
              <svg width="20" height="20" fill="none" stroke="#444" strokeWidth="1.400"><circle cx="12.500" cy="7" r="6" /><path d="M8.300 11.500L0.800 19" /></svg>
            </IconHold>
            <BigText $mt={3}>Edición</BigText><Chev />
          </BigTool>
        </Group>
        <Collapse><Chev up s={13} /></Collapse>
      </Ribbon>
    </>
  );
}

function RulerRow() {
  const marks = [];
  for (let q = -10; q <= 32; q++) marks.push(q);
  return (
    <RulerBar>
      <TabStop><svg width="8" height="9"><path d="M1.500 0v7H8" stroke="#555" strokeWidth="2.600" fill="none" /></svg></TabStop>
      <Ruler>
        <Marks>
          {marks.map((q) =>
            q === 0 ? <Mark key={q} $h={0} /> : q % 4 === 0 ? <Mark key={q} $h={0}>{Math.abs(q / 4)}</Mark> : <Mark key={q} $h={q % 2 === 0 ? 6 : 1.5} />
          )}
        </Marks>
        <Indent $x={157} $y={-4}><svg width="11" height="11"><path d="M0.500 0.500h10v4.500l-5 5-5-5z" fill="#fff" stroke="#777" /></svg></Indent>
        <Indent $x={103} $y={9}><svg width="11" height="16"><path d="M0.500 9.500V5.500l5-5 5 5v4zM0.500 9.500h10v5.500h-10z" fill="#fff" stroke="#777" /></svg></Indent>
      </Ruler>
    </RulerBar>
  );
}

/* ~word~ marks spelling, _word_ marks grammar */
const TEXT = [
  "encima de la línea cero desde el punto de vista ~retail~, ellos no verían un ~commitment~ ~of~ ~traders~ bajista",
  "ahí, nosotros _si_, con eso y el ~orderflow~ institucional, tienen 2 de las cosas _mas_ fuertes de mi repertorio a",
  "su favor, esperábamos debilidad en el dólar canadiense, vuelvan a ver los videos y lo verán, si operamos",
  "~commodities~, si estamos haciendo ~paper~ trading, hay muchas cosas que podrían haber hecho aquí, esto",
  "es lo que deben hacer de ahora en adelante, practicar, pueden utilizar el ~orderblock~ y comprar un ~put~",
  "~option~ o no comprarla, hacer ~paper~ trading. Mientras el precio sube a ese ~orderblock~, eso es",
  "esencialmente el 76.50, 77, pueden tomar un ~put~ en el 77 y cuando el precio ~subia~ al ~orderblock~ ahí, o",
  "cuando se iba al ~orderblock~ aquí, pueden tomar un ~put~ en el 77, 76, ahí les ~darian~ oportunidad de tomar",
  "un ~paper~ ~trade~ en esa opción, o pueden simplemente tomar un ~paper~ ~trade~, un demo ~trade~ con la venta",
  "de los futuros del dólar canadiense. Nos enfocaremos en el periodo de octubre a diciembre para el",
  "mercado de Forex, cuando el dólar canadiense para el programa de coberturas de los datos del ~cot~,",
  "cuando tenemos este ~bajismo~ aquí, tendríamos lo opuesto en el par del dólar/~cad~ que _seria_ alcista.",
  "Recuerden, de octubre a diciembre el dólar/~cad~ es alcista porque _los futuro_ del canadiense son bajistas.",
  "Con eso, vayamos al dólar/~cad~, comenzare con el grafico mensual aquí. Aquí tenemos velas bajistas que",
  "son un ~orderblock~ alcista, tenemos un pequeño cuerpo con una mecha que va básicamente a ~rebalancear~",
  "este volumen ~imbalance~ ¿funciona en un _grafico_ mensual? Jaja... este ~imbalance~, volumen ~imbalance~, no",
  "tiene cuerpos, son solo mechas, suben en esta vela y baja para ~rebalancear~, hay 2 pasadas que son",
  "necesarias para llenar eso, sucede aquí, hay un buen retorno a un ~orderblock~ que en si es suficiente,",
  "~imbalance~, ~fair~ ~value~ gap o ~vacio~, eso es lo que hace que los ~orderblocks~ sean de altas probabilidades, de",
  "otra forma es solo una vela bajista. Tenemos el ~orderblock~ que inicia con dos velas bajistas consecutivas,",
  "cuando vamos por encima de esa vela, por encima, ahí es cuando tenemos un ~ordeblock~ valido para este",
  "nivel, no es sino hasta que quebramos esto de forma significativa, esto no es significativo porque es solo",
];
const NEXT = "una mecha y cerramos el cuerpo ahí, necesitamos _mas_ tiempo dentro del ~orderblock~ ¿Dónde ira? Regresa";

const marked = (line) =>
  line.split(/(~[^~]+~|_[^_]+_)/).map((part, i) => {
    if (part[0] === "~") return <Misspelt key={i}>{part.slice(1, -1)}</Misspelt>;
    if (part[0] === "_") return <Grammar key={i}>{part.slice(1, -1)}</Grammar>;
    return part;
  });

export default function App() {
  return (
    <Screen>
      <Global />
      <VideoPane>
        <PaintApp />
        <Player>
          <Time $w={77} $ls={-0.8}>0:39:11</Time>
          <Seek><Played /><Knob /></Seek>
          <Time $w={50} $ls={-0.15}>0:27:07</Time>
        </Player>
      </VideoPane>
      <WordPane>
        <WordRibbon />
        <RulerRow />
        <DocArea>
          <Pages>
            <Page $h={600} $pt={0} $first>
              {TEXT.map((t, i) => <Line key={i} $shift={-2.4}>{marked(t)}</Line>)}
            </Page>
            <Page $h={140} $pt={107}><Line>{marked(NEXT)}</Line></Page>
          </Pages>
          <ScrollTrack>
            <ScrollButton><svg width="8" height="5"><path d="M0 5l4-5 4 5z" fill="#666" /></svg></ScrollButton>
            <ScrollThumb />
          </ScrollTrack>
        </DocArea>
      </WordPane>
    </Screen>
  );
}
